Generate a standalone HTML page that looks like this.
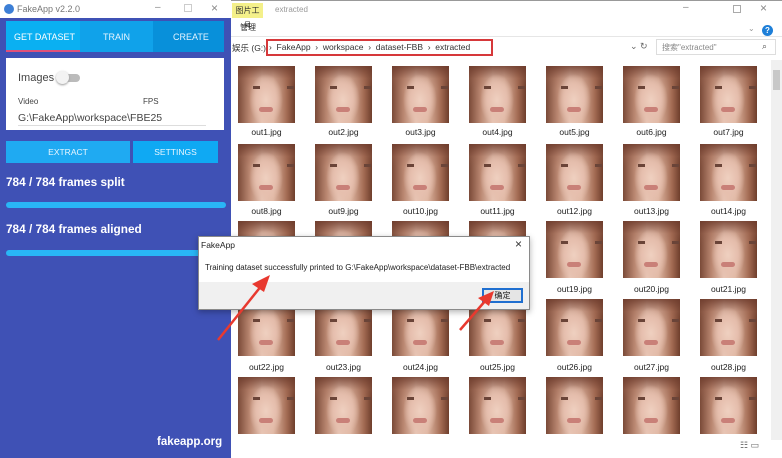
<!DOCTYPE html>
<html><head><meta charset="utf-8"><style>
*{margin:0;padding:0;box-sizing:border-box}
body{width:782px;height:458px;overflow:hidden;background:#fff;font-family:"Liberation Sans","Noto Sans CJK SC",sans-serif;position:relative}
.a{position:absolute}
.t{position:absolute;width:57px;height:57px;background:
radial-gradient(ellipse 17px 26px at 28px 34px,#efd0c0 0,#e6bfae 55%,rgba(220,170,150,0) 100%),
linear-gradient(180deg,rgba(110,60,45,.85) 0,rgba(150,95,75,.3) 22%,rgba(0,0,0,0) 40%),
linear-gradient(90deg,#7a4a38 0,#b98670 20%,#e8c6b5 42%,#e0b8a4 62%,#a26a52 86%,#6e3e2c 100%);}
.t:before{content:"";position:absolute;left:15px;top:20px;width:27px;height:3px;border-left:7px solid #6a4438;border-right:7px solid #6a4438}
.t:after{content:"";position:absolute;left:21px;top:41px;width:14px;height:5px;border-radius:3px;background:#c98078}
.l{position:absolute;width:77px;text-align:center;font-size:8.5px;color:#222}
</style></head><body>
<div class="a" style="left:0;top:0;width:231px;height:458px;background:#3f51b5"></div>
<div class="a" style="left:0;top:0;width:231px;height:18px;background:#fff"></div>
<div class="a" style="left:4px;top:4px;width:10px;height:10px;border-radius:50%;background:#3d7fd6"></div>
<div class="a" style="left:17px;top:4px;font-size:9px;color:#777">FakeApp v2.2.0</div>
<div class="a" style="left:155px;top:2px;font-size:10px;color:#888">–</div>
<div class="a" style="left:184px;top:4px;width:8px;height:8px;border:1px solid #ccc"></div>
<div class="a" style="left:211px;top:1px;font-size:12px;color:#888">×</div>
<div class="a" style="left:6px;top:21px;width:74px;height:31px;background:#0ab0f2"></div>
<div class="a" style="left:80px;top:21px;width:73px;height:31px;background:#10a2ea"></div>
<div class="a" style="left:153px;top:21px;width:71px;height:31px;background:#0890da"></div>
<div class="a" style="left:6px;top:50px;width:74px;height:2px;background:#e0507a"></div>
<div class="a" style="left:14px;top:32px;font-size:9px;color:#fff">GET DATASET</div>
<div class="a" style="left:103px;top:32px;font-size:9px;color:#e6f4ff">TRAIN</div>
<div class="a" style="left:173px;top:32px;font-size:9px;color:#e6f4ff">CREATE</div>
<div class="a" style="left:6px;top:58px;width:218px;height:72px;background:#fff"></div>
<div class="a" style="left:18px;top:72px;font-size:11px;color:#444">Images</div>
<div class="a" style="left:58px;top:74px;width:22px;height:8px;border-radius:4px;background:#bbb"></div>
<div class="a" style="left:56px;top:71px;width:13px;height:13px;border-radius:50%;background:#f3f3f3;box-shadow:0 1px 2px #999"></div>
<div class="a" style="left:18px;top:97px;font-size:8px;color:#444">Video</div>
<div class="a" style="left:143px;top:97px;font-size:8px;color:#444">FPS</div>
<div class="a" style="left:18px;top:112px;font-size:10.5px;color:#444">G:\FakeApp\workspace\FBE25</div>
<div class="a" style="left:18px;top:125px;width:188px;height:1px;background:#ddd"></div>
<div class="a" style="left:6px;top:141px;width:124px;height:22px;background:#1faaf2;color:#e8f6ff;font-size:8.5px;text-align:center;line-height:22px">EXTRACT</div>
<div class="a" style="left:133px;top:141px;width:85px;height:22px;background:#0fa9f3;color:#e8f6ff;font-size:8.5px;text-align:center;line-height:22px">SETTINGS</div>
<div class="a" style="left:6px;top:175px;font-size:11.8px;font-weight:bold;color:#fff">784 / 784 frames split</div>
<div class="a" style="left:6px;top:202px;width:220px;height:6px;border-radius:3px;background:#29b6f6"></div>
<div class="a" style="left:6px;top:222px;font-size:11.8px;font-weight:bold;color:#fff">784 / 784 frames aligned</div>
<div class="a" style="left:6px;top:250px;width:220px;height:6px;border-radius:3px;background:#29b6f6"></div>
<div class="a" style="left:157px;top:436px;font-size:11.5px;font-weight:bold;color:#fff">fakeapp.org</div>
<div class="a" style="left:231px;top:0;width:551px;height:1px;background:#999"></div>
<div class="a" style="left:232px;top:3px;width:31px;height:15px;background:#f4f08a;font-size:8px;line-height:15px;text-align:center;color:#333">图片工具</div>
<div class="a" style="left:275px;top:5px;font-size:8px;color:#999">extracted</div>
<div class="a" style="left:683px;top:2px;font-size:10px;color:#888">–</div>
<div class="a" style="left:733px;top:5px;width:8px;height:8px;border:1px solid #aaa"></div>
<div class="a" style="left:760px;top:1px;font-size:12px;color:#888">×</div>
<div class="a" style="left:240px;top:23px;font-size:8px;color:#333;line-height:10px">管理</div>
<div class="a" style="left:762px;top:25px;width:11px;height:11px;border-radius:50%;background:#1e7fd8;color:#fff;font-size:8px;text-align:center;line-height:11px;font-weight:bold">?</div>
<div class="a" style="left:748px;top:24px;font-size:8px;color:#999">⌄</div>
<div class="a" style="left:231px;top:36px;width:551px;height:1px;background:#e6e6e6"></div>
<div class="a" style="left:232px;top:42px;font-size:8.5px;color:#333">娱乐 (G:)</div>
<div class="a" style="left:266px;top:39px;width:227px;height:17px;border:2px solid #d6383a"></div>
<div class="a" style="left:269px;top:42px;font-size:8.5px;color:#333;white-space:pre">›  FakeApp  ›  workspace  ›  dataset-FBB  ›  extracted</div>
<div class="a" style="left:630px;top:41px;font-size:9px;color:#666">⌄ ↻</div>
<div class="a" style="left:656px;top:39px;width:120px;height:16px;border:1px solid #ddd"></div>
<div class="a" style="left:662px;top:42px;font-size:8px;color:#888">搜索"extracted"</div>
<div class="a" style="left:762px;top:41px;font-size:9px;color:#555">⌕</div>
<div class="a" style="left:771px;top:60px;width:11px;height:380px;background:#f0f0f0"></div>
<div class="a" style="left:773px;top:70px;width:7px;height:20px;background:#c8c8c8"></div>
<div id="g"></div>
<script>
var g=document.getElementById('g'),h='',n=1;
var tops=[66,144,221,299,377],labs=[132,211,289,367,445];
for(var r=0;r<5;r++)for(var c=0;c<7;c++){var x=238+c*77;
h+='<div class="t" style="left:'+x+'px;top:'+tops[r]+'px"></div>';
if(r<4)h+='<div class="l" style="left:'+(x-10)+'px;top:'+(labs[r]-5)+'px">out'+n+'.jpg</div>';n++;}
g.innerHTML=h;
</script>
<div class="a" style="left:740px;top:440px;font-size:9px;color:#666">☷ ▭</div>
<div class="a" style="left:198px;top:236px;width:332px;height:74px;background:#fff;border:1px solid #8a8a8a;box-shadow:0 2px 6px rgba(0,0,0,.3)"></div>
<div class="a" style="left:201px;top:240px;font-size:8.5px;color:#222">FakeApp</div>
<div class="a" style="left:515px;top:237px;font-size:12px;color:#333">×</div>
<div class="a" style="left:205px;top:263px;font-size:8px;color:#222">Training dataset successfully printed to G:\FakeApp\workspace\dataset-FBB\extracted</div>
<div class="a" style="left:199px;top:282px;width:330px;height:27px;background:#f0f0f0"></div>
<div class="a" style="left:482px;top:288px;width:41px;height:15px;border:2px solid #1f6fd0;background:#e5e5e5;font-size:8px;text-align:center;line-height:11px;color:#222">确定</div>
<svg class="a" style="left:0;top:0" width="782" height="458">
<g stroke="#e8392f" stroke-width="2.5" fill="#e8392f">
<line x1="218" y1="340" x2="262" y2="285"/>
<polygon points="270,275 252,284 264,292" stroke="none"/>
<line x1="460" y1="330" x2="486" y2="300"/>
<polygon points="494,291 478,298 489,306" stroke="none"/>
</g></svg>
</body></html>
